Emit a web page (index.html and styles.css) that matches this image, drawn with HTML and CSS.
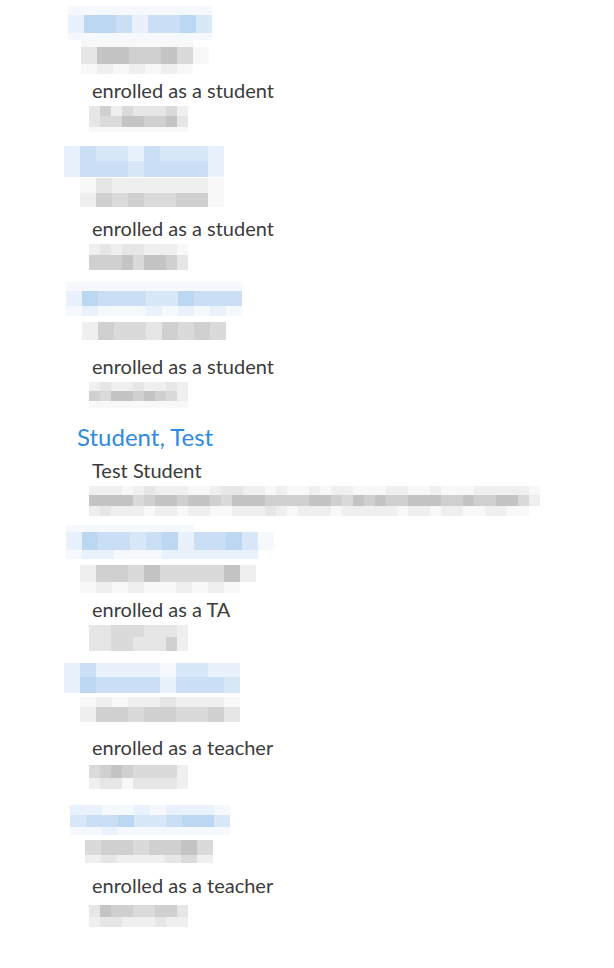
FILE: index.html
```html
<!DOCTYPE html>
<html lang="en">
<head>
<meta charset="utf-8">
<title>People</title>
<link rel="stylesheet" href="styles.css">
</head>
<body>
<ul class="people">
  <li class="person">
    <div class="slot title-slot">
      <div class="m x68">
        <div class="r h9"><span class="b0"></span><span class="b0"></span><span class="b0"></span><span class="b0"></span><span class="b0"></span><span class="b0"></span><span class="b0"></span><span class="b0"></span><span class="b0"></span></div>
        <div class="r h18"><span class="b1"></span><span class="b4"></span><span class="b4"></span><span class="b3"></span><span class="b1"></span><span class="b3"></span><span class="b3"></span><span class="b4"></span><span class="b2"></span></div>
        <div class="r h7"><span class="b0"></span><span class="b0"></span><span class="b0"></span><span class="b0"></span><span class="b0"></span><span class="b0"></span><span class="b0"></span><span class="b0"></span><span class="b0"></span></div>
      </div>
    </div>
    <div class="slot name-slot">
      <div class="m x81">
        <div class="r h7"><span class="g0"></span><span class="g0"></span><span class="g0"></span><span class="g0"></span><span class="g0"></span><span class="g0"></span><span class="g0"></span><span class="w"></span></div>
        <div class="r h17"><span class="g2"></span><span class="g5"></span><span class="g5"></span><span class="g4"></span><span class="g4"></span><span class="g5"></span><span class="g3"></span><span class="g0"></span></div>
        <div class="r h10"><span class="g0"></span><span class="g1"></span><span class="g0"></span><span class="g1"></span><span class="g0"></span><span class="g1"></span><span class="g0"></span><span class="w"></span></div>
      </div>
    </div>
    <div class="role">enrolled as a student</div>
    <div class="slot login-slot">
      <div class="m s11 x89">
        <div class="r h10"><span class="g2"></span><span class="g4"></span><span class="g1"></span><span class="g3"></span><span class="g2"></span><span class="g2"></span><span class="g2"></span><span class="g3"></span><span class="g1"></span></div>
        <div class="r h11"><span class="g2"></span><span class="g3"></span><span class="g3"></span><span class="g5"></span><span class="g5"></span><span class="g4"></span><span class="g4"></span><span class="g5"></span><span class="g2"></span></div>
        <div class="r h5"><span class="g0"></span><span class="g0"></span><span class="g0"></span><span class="g0"></span><span class="g0"></span><span class="g0"></span><span class="g0"></span><span class="g0"></span><span class="g0"></span></div>
      </div>
    </div>
  </li>

  <li class="person">
    <div class="slot title-slot">
      <div class="m x64">
        <div class="r h2"></div>
        <div class="r h15"><span class="b1"></span><span class="b3"></span><span class="b2"></span><span class="b2"></span><span class="b1"></span><span class="b3"></span><span class="b2"></span><span class="b2"></span><span class="b2"></span><span class="b1"></span></div>
        <div class="r h16"><span class="b1"></span><span class="b3"></span><span class="b3"></span><span class="b3"></span><span class="b2"></span><span class="b3"></span><span class="b3"></span><span class="b3"></span><span class="b3"></span><span class="b1"></span></div>
      </div>
    </div>
    <div class="slot name-slot">
      <div class="m x80">
        <div class="r h15"><span class="g0"></span><span class="g2"></span><span class="g1"></span><span class="g1"></span><span class="g1"></span><span class="g1"></span><span class="g1"></span><span class="g1"></span><span class="g0"></span></div>
        <div class="r h14"><span class="g1"></span><span class="g4"></span><span class="g3"></span><span class="g4"></span><span class="g3"></span><span class="g3"></span><span class="g4"></span><span class="g4"></span><span class="g0"></span></div>
      </div>
    </div>
    <div class="role">enrolled as a student</div>
    <div class="slot login-slot">
      <div class="m s11 x89">
        <div class="r h11"><span class="g1"></span><span class="g2"></span><span class="g1"></span><span class="g2"></span><span class="g2"></span><span class="g1"></span><span class="g1"></span><span class="g1"></span><span class="g0"></span></div>
        <div class="r h15"><span class="g4"></span><span class="g4"></span><span class="g4"></span><span class="g5"></span><span class="g3"></span><span class="g5"></span><span class="g5"></span><span class="g4"></span><span class="g2"></span></div>
      </div>
    </div>
  </li>

  <li class="person">
    <div class="slot title-slot">
      <div class="m x66">
        <div class="r h9"><span class="b0"></span><span class="b0"></span><span class="b0"></span><span class="b0"></span><span class="b0"></span><span class="b0"></span><span class="b0"></span><span class="b0"></span><span class="b0"></span><span class="b0"></span><span class="b0"></span></div>
        <div class="r h15"><span class="b1"></span><span class="b4"></span><span class="b3"></span><span class="b3"></span><span class="b3"></span><span class="b2"></span><span class="b2"></span><span class="b4"></span><span class="b3"></span><span class="b3"></span><span class="b3"></span></div>
        <div class="r h10"><span class="b0"></span><span class="b1"></span><span class="b0"></span><span class="b0"></span><span class="b0"></span><span class="b1"></span><span class="b0"></span><span class="b1"></span><span class="b0"></span><span class="b1"></span><span class="b0"></span></div>
      </div>
    </div>
    <div class="slot name-slot">
      <div class="m x82">
        <div class="r h6"></div>
        <div class="r h18"><span class="g1"></span><span class="g4"></span><span class="g3"></span><span class="g3"></span><span class="g2"></span><span class="g4"></span><span class="g3"></span><span class="g4"></span><span class="g3"></span></div>
        <div class="r h10"></div>
      </div>
    </div>
    <div class="role">enrolled as a student</div>
    <div class="slot login-slot">
      <div class="m s11 x89">
        <div class="r h9"><span class="g1"></span><span class="g2"></span><span class="g1"></span><span class="g1"></span><span class="g2"></span><span class="g1"></span><span class="g1"></span><span class="g2"></span><span class="g1"></span></div>
        <div class="r h10"><span class="g4"></span><span class="g3"></span><span class="g5"></span><span class="g5"></span><span class="g4"></span><span class="g5"></span><span class="g4"></span><span class="g3"></span><span class="g1"></span></div>
        <div class="r h7"><span class="g0"></span><span class="g0"></span><span class="g0"></span><span class="g0"></span><span class="g0"></span><span class="g0"></span><span class="g0"></span><span class="g0"></span><span class="g0"></span></div>
      </div>
    </div>
  </li>

  <li class="person short">
    <div class="title">Student, Test</div>
    <div class="fullname">Test Student</div>
    <div class="slot bar-slot">
      <div class="m s11 x89">
        <div class="r h9"><span class="g1"></span><span class="g1"></span><span class="g1"></span><span class="g0"></span><span class="g1"></span><span class="g2"></span><span class="g1"></span><span class="g1"></span><span class="g1"></span><span class="g0"></span><span class="g0"></span><span class="g1"></span><span class="g2"></span><span class="g2"></span><span class="g1"></span><span class="g1"></span><span class="g0"></span><span class="g1"></span><span class="g0"></span><span class="g0"></span><span class="g1"></span><span class="g0"></span><span class="g1"></span><span class="g1"></span><span class="g0"></span><span class="g0"></span><span class="g0"></span><span class="g1"></span><span class="g1"></span><span class="g0"></span><span class="g0"></span><span class="g1"></span><span class="g0"></span><span class="g0"></span><span class="g0"></span><span class="g1"></span><span class="g1"></span><span class="g1"></span><span class="g1"></span><span class="g1"></span><span class="g0"></span></div>
        <div class="r h11"><span class="g5"></span><span class="g5"></span><span class="g5"></span><span class="g5"></span><span class="g3"></span><span class="g4"></span><span class="g5"></span><span class="g5"></span><span class="g4"></span><span class="g5"></span><span class="g5"></span><span class="g4"></span><span class="g3"></span><span class="g5"></span><span class="g5"></span><span class="g5"></span><span class="g4"></span><span class="g4"></span><span class="g4"></span><span class="g4"></span><span class="g5"></span><span class="g5"></span><span class="g4"></span><span class="g3"></span><span class="g5"></span><span class="g4"></span><span class="g5"></span><span class="g4"></span><span class="g4"></span><span class="g5"></span><span class="g5"></span><span class="g5"></span><span class="g4"></span><span class="g4"></span><span class="g5"></span><span class="g4"></span><span class="g4"></span><span class="g5"></span><span class="g5"></span><span class="g3"></span><span class="g1"></span></div>
        <div class="r h10"><span class="g1"></span><span class="g2"></span><span class="g1"></span><span class="g1"></span><span class="g1"></span><span class="g0"></span><span class="g1"></span><span class="g1"></span><span class="g0"></span><span class="g1"></span><span class="g1"></span><span class="g0"></span><span class="g0"></span><span class="g1"></span><span class="g1"></span><span class="g1"></span><span class="g2"></span><span class="g1"></span><span class="g0"></span><span class="g1"></span><span class="g1"></span><span class="g1"></span><span class="g0"></span><span class="g1"></span><span class="g1"></span><span class="g1"></span><span class="g1"></span><span class="g1"></span><span class="g0"></span><span class="g1"></span><span class="g1"></span><span class="g0"></span><span class="g1"></span><span class="g1"></span><span class="g0"></span><span class="g0"></span><span class="g1"></span><span class="g1"></span><span class="g0"></span><span class="g0"></span><span class="w"></span></div>
      </div>
    </div>
  </li>

  <li class="person">
    <div class="slot title-slot">
      <div class="m x66">
        <div class="r h7"><span class="b0"></span><span class="b0"></span><span class="b0"></span><span class="b0"></span><span class="b0"></span><span class="b0"></span><span class="b0"></span><span class="b0"></span><span class="w"></span><span class="w"></span><span class="w"></span><span class="w"></span></div>
        <div class="r h18"><span class="b1"></span><span class="b4"></span><span class="b3"></span><span class="b3"></span><span class="b2"></span><span class="b3"></span><span class="b4"></span><span class="b1"></span><span class="b3"></span><span class="b3"></span><span class="b4"></span><span class="b2"></span><span class="b0"></span></div>
        <div class="r h9"><span class="b0"></span><span class="b1"></span><span class="b1"></span><span class="b0"></span><span class="b0"></span><span class="b0"></span><span class="b1"></span><span class="b1"></span><span class="b1"></span><span class="b1"></span><span class="b1"></span><span class="b1"></span></div>
      </div>
    </div>
    <div class="slot name-slot">
      <div class="m x80">
        <div class="r h6"></div>
        <div class="r h17"><span class="g1"></span><span class="g4"></span><span class="g4"></span><span class="g3"></span><span class="g5"></span><span class="g3"></span><span class="g3"></span><span class="g3"></span><span class="g3"></span><span class="g5"></span><span class="g1"></span></div>
        <div class="r h11"><span class="g0"></span><span class="g1"></span><span class="g0"></span><span class="g1"></span><span class="g0"></span><span class="g0"></span><span class="g1"></span><span class="g0"></span><span class="g1"></span><span class="g0"></span><span class="w"></span></div>
      </div>
    </div>
    <div class="role">enrolled as a TA</div>
    <div class="slot login-slot">
      <div class="m s11 x89">
        <div class="r h12"><span class="g2"></span><span class="g2"></span><span class="g3"></span><span class="g3"></span><span class="g3"></span><span class="g2"></span><span class="g2"></span><span class="g2"></span><span class="g1"></span></div>
        <div class="r h14"><span class="g2"></span><span class="g2"></span><span class="g3"></span><span class="g3"></span><span class="g2"></span><span class="g2"></span><span class="g2"></span><span class="g4"></span><span class="g1"></span></div>
      </div>
    </div>
  </li>

  <li class="person">
    <div class="slot title-slot">
      <div class="m x64">
        <div class="r h14"><span class="b1"></span><span class="b3"></span><span class="b1"></span><span class="b1"></span><span class="b1"></span><span class="b1"></span><span class="b0"></span><span class="b2"></span><span class="b2"></span><span class="b1"></span><span class="b1"></span></div>
        <div class="r h16"><span class="b1"></span><span class="b4"></span><span class="b3"></span><span class="b3"></span><span class="b3"></span><span class="b3"></span><span class="b1"></span><span class="b3"></span><span class="b3"></span><span class="b3"></span><span class="b2"></span></div>
        <div class="r h4"></div>
      </div>
    </div>
    <div class="slot name-slot">
      <div class="m x80">
        <div class="r h10"><span class="g0"></span><span class="g1"></span><span class="g0"></span><span class="g1"></span><span class="g1"></span><span class="g2"></span><span class="g1"></span><span class="g1"></span><span class="g1"></span><span class="g0"></span></div>
        <div class="r h15"><span class="g1"></span><span class="g4"></span><span class="g4"></span><span class="g3"></span><span class="g4"></span><span class="g4"></span><span class="g3"></span><span class="g3"></span><span class="g4"></span><span class="g2"></span></div>
        <div class="r h9"></div>
      </div>
    </div>
    <div class="role">enrolled as a teacher</div>
    <div class="slot login-slot">
      <div class="m s11 x89">
        <div class="r h2"></div>
        <div class="r h13"><span class="g3"></span><span class="g4"></span><span class="g5"></span><span class="g4"></span><span class="g3"></span><span class="g3"></span><span class="g3"></span><span class="g3"></span><span class="g1"></span></div>
        <div class="r h11"><span class="g1"></span><span class="g2"></span><span class="g2"></span><span class="g0"></span><span class="g2"></span><span class="g2"></span><span class="g2"></span><span class="g2"></span><span class="g1"></span></div>
      </div>
    </div>
  </li>

  <li class="person">
    <div class="slot title-slot">
      <div class="m x70">
        <div class="r h4"></div>
        <div class="r h10"><span class="b1"></span><span class="b1"></span><span class="b0"></span><span class="b0"></span><span class="b1"></span><span class="b0"></span><span class="b1"></span><span class="b1"></span><span class="b1"></span><span class="b0"></span></div>
        <div class="r h12"><span class="b2"></span><span class="b3"></span><span class="b3"></span><span class="b4"></span><span class="b2"></span><span class="b2"></span><span class="b3"></span><span class="b4"></span><span class="b4"></span><span class="b2"></span></div>
        <div class="r h8"><span class="b0"></span><span class="b0"></span><span class="b1"></span><span class="b0"></span><span class="b0"></span><span class="b0"></span><span class="b0"></span><span class="b0"></span><span class="b0"></span><span class="b0"></span></div>
      </div>
    </div>
    <div class="slot name-slot">
      <div class="m x85">
        <div class="r h5"></div>
        <div class="r h15"><span class="g3"></span><span class="g4"></span><span class="g4"></span><span class="g3"></span><span class="g4"></span><span class="g4"></span><span class="g5"></span><span class="g3"></span></div>
        <div class="r h8"><span class="g1"></span><span class="g2"></span><span class="g1"></span><span class="g1"></span><span class="g1"></span><span class="g2"></span><span class="g3"></span><span class="g1"></span></div>
        <div class="r h6"></div>
      </div>
    </div>
    <div class="role">enrolled as a teacher</div>
    <div class="slot login-slot">
      <div class="m s11 x89">
        <div class="r h4"></div>
        <div class="r h12"><span class="g2"></span><span class="g5"></span><span class="g4"></span><span class="g4"></span><span class="g3"></span><span class="g3"></span><span class="g4"></span><span class="g4"></span><span class="g2"></span></div>
        <div class="r h10"><span class="g1"></span><span class="g2"></span><span class="g2"></span><span class="g1"></span><span class="g1"></span><span class="g1"></span><span class="g2"></span><span class="g1"></span><span class="g1"></span></div>
      </div>
    </div>
  </li>
</ul>
</body>
</html>
```

FILE: styles.css
```css
html, body {
  margin: 0;
  padding: 0;
  background: #ffffff;
}

body {
  font-family: Lato, "Open Sans", "Liberation Sans", sans-serif;
  color: #3b3b3b;
  width: 614px;
  height: 968px;
  overflow: hidden;
}

.people {
  list-style: none;
  margin: 0;
  padding: 6px 0 0 0;
}

.person {
  display: flex;
  flex-direction: column;
  padding-bottom: 12px;
}

.person.short {
  padding-bottom: 9px;
}

.slot {
  display: flex;
  flex-direction: column;
}

.title-slot,
.name-slot {
  height: 34px;
}

.login-slot {
  height: 26px;
}

.bar-slot {
  height: 30px;
}

.role {
  height: 32px;
  line-height: 32px;
  font-size: 20px;
  padding-left: 92px;
  color: #3b3b3b;
}

.title {
  height: 34px;
  line-height: 34px;
  font-size: 24px;
  padding-left: 77px;
  color: #2f8be0;
}

.fullname {
  height: 32px;
  line-height: 32px;
  font-size: 20px;
  padding-left: 92px;
  color: #3b3b3b;
}

/* pixelated (blurred) content */
.m {
  display: flex;
  flex-direction: column;
}

.r {
  display: flex;
}

.r span {
  flex: none;
  width: 16px;
  height: 100%;
}

.s11 .r span {
  width: 11px;
}

.x64 { margin-left: 64px; }
.x66 { margin-left: 66px; }
.x68 { margin-left: 68px; }
.x70 { margin-left: 70px; }
.x80 { margin-left: 80px; }
.x81 { margin-left: 81px; }
.x82 { margin-left: 82px; }
.x85 { margin-left: 85px; }
.x89 { margin-left: 89px; }

.h2 { height: 2px; }
.h4 { height: 4px; }
.h5 { height: 5px; }
.h6 { height: 6px; }
.h7 { height: 7px; }
.h8 { height: 8px; }
.h9 { height: 9px; }
.h10 { height: 10px; }
.h11 { height: 11px; }
.h12 { height: 12px; }
.h13 { height: 13px; }
.h14 { height: 14px; }
.h15 { height: 15px; }
.h16 { height: 16px; }
.h17 { height: 17px; }
.h18 { height: 18px; }

.w  { background: transparent; }

.b0 { background: #f5f9fe; }
.b1 { background: #e8f1fc; }
.b2 { background: #d9e8f8; }
.b3 { background: #cadff5; }
.b4 { background: #bcd7f2; }

.g0 { background: #f8f8f8; }
.g1 { background: #efefef; }
.g2 { background: #e6e6e6; }
.g3 { background: #dadada; }
.g4 { background: #d0d0d0; }
.g5 { background: #c4c4c4; }
```
